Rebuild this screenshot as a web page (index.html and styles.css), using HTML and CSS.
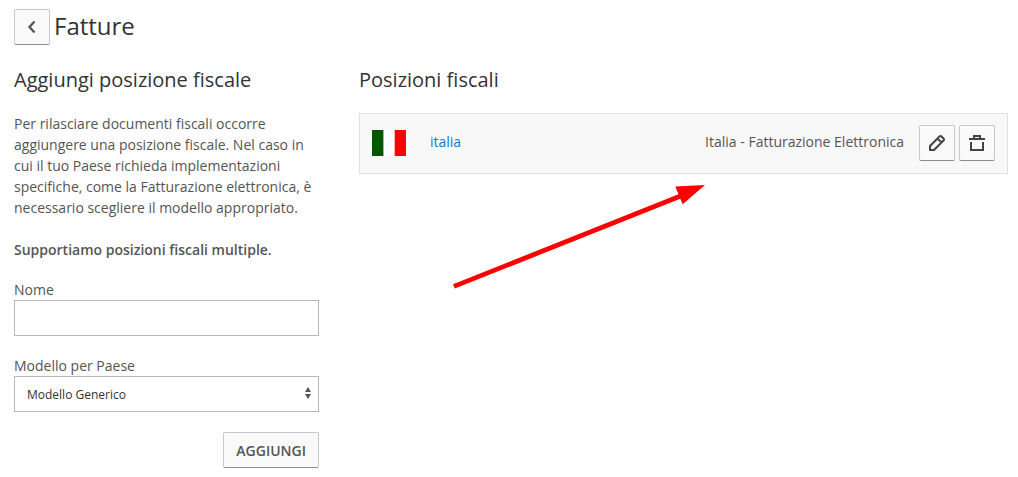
FILE: index.html
```html
<!DOCTYPE html>
<html lang="it">
<head>
    <meta charset="UTF-8">
    <meta name="viewport" content="width=device-width, initial-scale=1.0">
    <title>Fatture</title>
    <link rel="stylesheet" href="styles.css">
</head>
<body>

    <header class="page-header">
        <button type="button" class="btn btn-icon" aria-label="Indietro">
            <svg width="20" height="20" viewBox="0 0 20 20"><path d="M12.500 4.500L7.500 10l5 5.500" fill="none" stroke="#555" stroke-width="2.300"/></svg>
        </button>
        <h1>Fatture</h1>
    </header>

    <main class="columns">
        <section class="add-position">
            <h2>Aggiungi posizione fiscale</h2>
            <p>Per rilasciare documenti fiscali occorre aggiungere una posizione fiscale. Nel caso in cui il tuo Paese richieda implementazioni specifiche, come la Fatturazione elettronica, è necessario scegliere il modello appropriato.</p>
            <p><strong>Supportiamo posizioni fiscali multiple.</strong></p>

            <form>
                <div class="field">
                    <label for="nome">Nome</label>
                    <input type="text" id="nome" name="nome">
                </div>
                <div class="field">
                    <label for="modello">Modello per Paese</label>
                    <div class="select-wrap">
                        <select id="modello" name="modello">
                            <option>Modello Generico</option>
                        </select>
                        <svg class="select-arrows" width="6" height="12" viewBox="0 0 6 12"><path d="M3 0l3 5H0zM0 7h6l-3 5z" fill="#555"/></svg>
                    </div>
                </div>
                <div class="form-actions">
                    <button type="button" class="btn">AGGIUNGI</button>
                </div>
            </form>
        </section>

        <section class="positions">
            <h2>Posizioni fiscali</h2>
            <div class="position-row">
                <svg class="flag" width="34" height="26" viewBox="0 0 34 26" role="img" aria-label="Italia">
                    <path d="M0 0h34v26H0z" fill="#fff"/>
                    <path d="M0 0h11.400v26H0z" fill="#005700"/>
                    <path d="M22.700 0H34v26H22.700z" fill="#fc0000"/>
                </svg>
                <a href="#italia">italia</a>
                <span class="model">Italia - Fatturazione Elettronica</span>
                <div class="row-actions">
                    <button type="button" class="btn btn-icon" aria-label="Modifica">
                        <svg width="20" height="20" viewBox="0 0 20 20" fill="none" stroke="#444" stroke-width="2" stroke-linejoin="round"><path d="M3 17v-4l9.500-9.500q1-1 2 0l2 2q1 1 0 2L7 17zM10.500 5.500l4 4"/></svg>
                    </button>
                    <button type="button" class="btn btn-icon" aria-label="Elimina">
                        <svg width="20" height="20" viewBox="0 0 20 20" fill="none" stroke="#444" stroke-width="2"><path d="M2 6h16M7 6V3h6v3M4 9v8h12V9"/></svg>
                    </button>
                </div>
            </div>
            <!-- Freccia che indica la posizione -->
            <svg class="arrow" width="252" height="106" viewBox="0 0 252 106" fill="#fe0000" aria-hidden="true">
                <path d="M0 100.200L225.500 10.200 222.300 2.500 252 1 229.700 20.300 227.300 14.800 1.800 104.600z"/>
            </svg>
        </section>
    </main>

</body>
</html>
```
FILE: styles.css
```css
* {
    box-sizing: border-box;
}
body {
    margin: 0;
    padding: 9px 10px 9px 14px;
    font-family: "Open Sans", sans-serif;
    font-size: 14px;
    line-height: 21px;
    color: #555;
    background-color: #fff;
}
svg {
    display: block;
}
h1, h2 {
    margin: 0;
    font-weight: 400;
    color: #333;
}
h1 {
    font-size: 24px;
    line-height: 34px;
}
h2 {
    font-size: 20px;
    line-height: 28px;
    margin-bottom: 19px;
}
p {
    margin: 0 0 21px;
}
strong {
    font-weight: 600;
}
a {
    color: #0e7bd0;
    text-decoration: none;
}
.page-header {
    display: flex;
    gap: 4px;
    margin-bottom: 21px;
}
.columns {
    display: grid;
    grid-template-columns: 305px 1fr;
    gap: 40px;
}
.add-position p:last-of-type {
    margin-bottom: 19px;
}
.btn {
    height: 36px;
    padding: 0 12px;
    border: 1px solid #c8c9d0;
    border-bottom-color: #8b8b93;
    border-radius: 2px;
    background-color: #fafafa;
    color: #555;
    font-family: inherit;
    font-size: 14px;
    font-weight: 600;
    cursor: pointer;
}
.btn-icon {
    display: flex;
    align-items: center;
    justify-content: center;
    width: 36px;
    padding: 0;
}
.field + .field {
    margin-top: 19px;
}
.field label {
    display: block;
}
.field input,
.field select {
    display: block;
    width: 100%;
    height: 36px;
    padding: 0 12px;
    border: 1px solid #b8b8b8;
    border-radius: 0;
    background-color: #fff;
    color: #333;
    font-family: inherit;
    font-size: 12px;
    appearance: none;
}
.select-wrap {
    position: relative;
}
.select-arrows {
    position: absolute;
    top: 11px;
    right: 8px;
    pointer-events: none;
}
.form-actions {
    display: flex;
    justify-content: flex-end;
    margin-top: 20px;
}
.position-row {
    display: flex;
    align-items: center;
    padding: 11px 12px 12px;
    border: 1px solid #e0e0e0;
    background-color: #f8f8f8;
}
.position-row a,
.model {
    padding-bottom: 3px;
}
.flag {
    margin-right: 24px;
}
.model {
    margin-left: auto;
}
.row-actions {
    display: flex;
    gap: 4px;
    margin-left: 15px;
}
.arrow {
    margin: 10px 0 0 94px;
}
```
